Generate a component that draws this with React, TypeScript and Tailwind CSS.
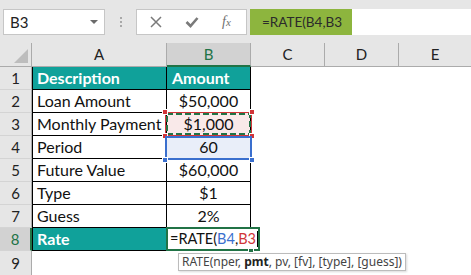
import React from "react";

const rows = [
  { n: 1, a: "Description", b: "Amount", head: true },
  { n: 2, a: "Loan Amount", b: "$50,000" },
  { n: 3, a: "Monthly Payment", b: "$1,000", bg: "bg-[#f9e9e9]" },
  { n: 4, a: "Period", b: "60", bg: "bg-[#e9eef9]" },
  { n: 5, a: "Future Value", b: "$60,000" },
  { n: 6, a: "Type", b: "$1" },
  { n: 7, a: "Guess", b: "2%" },
  { n: 8, a: "Rate", b: "", rate: true },
];

function Corner({ className }: { className: string }) {
  return <div className={`absolute w-[6px] h-[6px] border border-white ${className}`} />;
}

export default function App() {
  return (
    <div className="w-[471px] h-[275px] bg-white overflow-hidden font-['Lato',sans-serif] text-[#111]">
      {/* formula bar */}
      <div className="h-[43px] bg-[#e6e6e6] flex items-start pt-[9px] pl-[3px] pr-0">
        <div className="w-[102px] h-[26px] bg-white border border-[#c6c6c6] flex items-center justify-between pl-[6px] pr-[6px] text-[15px] text-[#222]">
          <span>B3</span>
          <span className="w-0 h-0 border-l-[4px] border-r-[4px] border-t-[4px] border-l-transparent border-r-transparent border-t-[#6b6b6b]" />
        </div>
        <div className="w-[31px] h-[26px] flex flex-col items-center justify-center gap-[2px]">
          <span className="w-[2px] h-[2px] bg-[#a8a8a8]" />
          <span className="w-[2px] h-[2px] bg-[#a8a8a8]" />
          <span className="w-[2px] h-[2px] bg-[#a8a8a8]" />
        </div>
        <div className="w-[111px] h-[26px] bg-white border border-[#c6c6c6] flex items-center text-[#777]">
          <svg width="12" height="12" viewBox="0 0 12 12" className="ml-[13px]">
            <path d="M1 1 L11 11 M11 1 L1 11" stroke="#7a7a7a" strokeWidth="1.5" />
          </svg>
          <svg width="14" height="12" viewBox="0 0 14 12" className="ml-[23px]">
            <path d="M1.5 6 L5.5 10 L12.5 2" stroke="#7a7a7a" strokeWidth="2.6" fill="none" />
          </svg>
          <span className="ml-[23px] font-['Liberation_Serif',serif] italic text-[14px] text-[#6f6f6f] leading-none">
            f<span className="text-[11px]">x</span>
          </span>
        </div>
        <div className="flex-1 h-[26px] bg-white ml-[3px] flex">
          <div className="w-[102px] h-full bg-[#8db53e] flex items-center pl-[12px] text-[13.5px] text-[#2b2b2b]">
            =RATE(B4,B3
          </div>
        </div>
      </div>

      <div className="relative">
        {/* column headers */}
        <div className="flex h-[24px] bg-[#e6e6e6] text-[15px] text-[#222]">
          <div className="w-[32px] relative border-r border-b border-[#ababab]">
            <div className="absolute right-[3px] bottom-[3px] w-0 h-0 border-r-[14px] border-r-[#bdbdbd] border-t-[14px] border-t-transparent" />
          </div>
          <div className="w-[135px] flex items-center justify-center border-r border-b border-[#ababab]">A</div>
          <div className="w-[84px] flex items-center justify-center bg-[#d2d2d2] text-[#217346] border-r border-[#ababab] border-b-2 border-b-[#217346]">B</div>
          <div className="w-[74px] flex items-center justify-center border-r border-b border-[#ababab]">C</div>
          <div className="w-[74px] flex items-center justify-center border-r border-b border-[#ababab]">D</div>
          <div className="flex-1 flex items-center justify-center border-b border-[#ababab]">E</div>
        </div>

        {rows.map((r) => (
          <div key={r.n} className="flex h-[23px] text-[16px]">
            <div
              className={`w-[32px] flex items-center justify-center text-[15px] border-b border-[#d4d4d4] ${
                r.rate ? "bg-[#d2d2d2] text-[#217346] border-r-2 border-r-[#217346]" : "bg-[#e6e6e6] text-[#222] border-r border-r-[#ababab]"
              }`}
            >
              {r.n}
            </div>
            <div
              className={`w-[135px] flex items-center pl-[4px] border-l border-r border-b border-black ${
                r.head || r.rate ? "bg-[#10a19a] text-white font-bold" : ""
              }`}
            >
              {r.a}
            </div>
            <div
              className={`w-[84px] flex items-center border-r border-b border-black ${
                r.head ? "bg-[#10a19a] text-white font-bold pl-[5px]" : `justify-center ${r.bg ?? ""}`
              }`}
            >
              {r.b}
            </div>
          </div>
        ))}
        <div className="flex h-[24px] text-[15px]">
          <div className="w-[32px] flex items-center justify-center bg-[#e6e6e6] text-[#222] border-r border-[#ababab]">9</div>
        </div>

        {/* B3 copy marquee + red reference */}
        <div className="absolute left-[165px] top-[69px] w-[87px] h-[24px] border border-[#d13438]">
          <svg width="85" height="22" className="absolute left-0 top-0">
            <rect x="1" y="1" width="83" height="20" fill="none" stroke="#217346" strokeWidth="2" strokeDasharray="6 3" />
          </svg>
          <Corner className="bg-[#d13438] -left-[4px] -top-[4px]" />
          <Corner className="bg-[#d13438] -right-[4px] -top-[4px]" />
          <Corner className="bg-[#d13438] -left-[4px] -bottom-[4px]" />
          <Corner className="bg-[#d13438] -right-[4px] -bottom-[4px]" />
        </div>

        {/* B4 blue reference */}
        <div className="absolute left-[165px] top-[93px] w-[87px] h-[24px] border-2 border-[#3a6fce]">
          <Corner className="bg-[#3a6fce] -right-[5px] -bottom-[5px]" />
          <Corner className="bg-[#3a6fce] -left-[5px] -bottom-[5px]" />
        </div>

        {/* B8 in edit mode */}
        <div className="absolute left-[166px] top-[184px] w-[94px] h-[24px] bg-white border-2 border-[#217346] flex items-center pl-[2px] text-[14.5px] whitespace-nowrap">
          <span>=RATE(</span>
          <span className="text-[#3a6fce]">B4</span>
          <span>,</span>
          <span className="text-[#d13438]">B3</span>
          <span className="w-[1px] h-[16px] bg-black ml-[1px]" />
          <div className="absolute left-[80px] -bottom-[4px] w-[6px] h-[5px] bg-[#217346] border border-white" />
        </div>

        {/* tooltip */}
        <div className="absolute left-[178px] top-[210px] h-[18px] bg-white border border-[#bcbcbc] shadow-[1px_1px_2px_rgba(0,0,0,0.15)] flex items-center px-[3px] text-[12px] text-[#444] font-['Noto_Sans',sans-serif] whitespace-nowrap">
          RATE(nper,&nbsp;<b className="text-[#222]">pmt</b>, pv, [fv], [type], [guess])
        </div>
      </div>
    </div>
  );
}
